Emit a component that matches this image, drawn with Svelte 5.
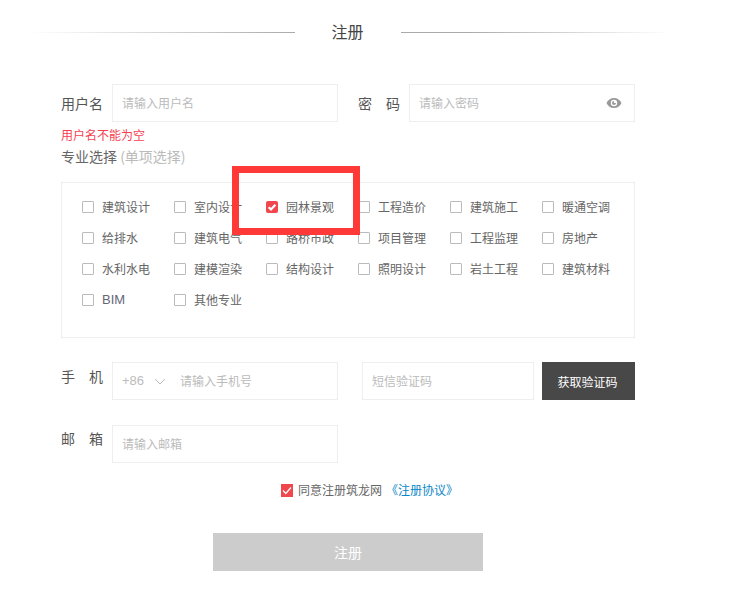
<script>
  const majors = ['建筑设计','室内设计','园林景观','工程造价','建筑施工','暖通空调','给排水','建筑电气','路桥市政','项目管理','工程监理','房地产','水利水电','建模渲染','结构设计','照明设计','岩土工程','建筑材料','BIM','其他专业'];
</script>

<div class="page">
  <header class="title">
    <span class="line left"></span>
    <h1>注册</h1>
    <span class="line right"></span>
  </header>

  <form class="form">
    <div class="row first">
      <div class="field">
        <span class="label">用户名</span>
        <div class="input"><span class="ph">请输入用户名</span></div>
      </div>
      <div class="field pw">
        <span class="label spread short">密码</span>
        <div class="input between">
          <span class="ph">请输入密码</span>
          <svg class="eye" viewBox="0 0 16 12" width="16" height="12">
            <path fill="#999" fill-rule="evenodd" d="M8 1C4.6 1 1.8 3 .5 6c1.3 3 4.1 5 7.5 5s6.200-2 7.500-5C14.200 3 11.400 1 8 1zm0 8.200A3.200 3.200 0 1 1 8 2.800a3.200 3.200 0 0 1 0 6.400z"/>
            <path fill="#999" d="M8 4a2 2 0 1 0 2 2H8z"/>
          </svg>
        </div>
      </div>
    </div>

    <p class="error">用户名不能为空</p>
    <p class="section">专业选择 <span class="hint">(单项选择)</span></p>

    <div class="majors">
      {#each majors as m, i}
        <div class="major">
          <span class="box" class:checked={i === 2}>
            {#if i === 2}
              <svg viewBox="0 0 12 12" width="12" height="12"><path d="M2.600 6.200 5 8.400 9.400 3.800" fill="none" stroke="#fff" stroke-width="2.200"/></svg>
            {/if}
          </span>
          <span class="name" class:latin={m === 'BIM'}>{m}</span>
        </div>
      {/each}
      <div class="mark"></div>
    </div>

    <div class="row phone">
      <div class="field">
        <span class="label spread top">手机</span>
        <div class="input">
          <span class="code">+86</span>
          <svg class="chev" viewBox="0 0 12 7" width="12" height="7"><path d="M1 1l5 5 5-5" fill="none" stroke="#bbb" stroke-width="1"/></svg>
          <span class="ph">请输入手机号</span>
        </div>
      </div>
      <div class="sms">
        <div class="input grow"><span class="ph">短信验证码</span></div>
        <button type="button" class="get">获取验证码</button>
      </div>
    </div>

    <div class="row email">
      <div class="field">
        <span class="label spread top mail">邮箱</span>
        <div class="input"><span class="ph">请输入邮箱</span></div>
      </div>
    </div>

    <div class="agree">
      <span class="tick">
        <svg viewBox="0 0 12 13" width="12" height="13"><path d="M2 6.500 4.800 9.500 10 3.500" fill="none" stroke="#fff" stroke-width="1.200"/></svg>
      </span>
      <span class="agree-text">同意注册筑龙网</span>
      <a href="#top" class="link">《注册协议》</a>
    </div>

    <button type="button" class="submit">注册</button>
  </form>
</div>

<style>
  :global(body) {
    margin: 0;
    background: #fff;
  }
  .page {
    width: 754px;
    height: 589px;
    overflow: hidden;
    font-family: "Noto Sans CJK SC", "Noto Sans", sans-serif;
    color: #555;
    font-size: 12px;
  }
  .title {
    display: flex;
    align-items: center;
    height: 20px;
    padding-top: 22px;
  }
  .title h1 {
    margin: 0;
    width: 106px;
    box-sizing: border-box;
    padding: 0 1px 2px 0;
    flex: none;
    text-align: center;
    font-size: 16px;
    font-weight: 400;
    line-height: 20px;
    color: #444;
  }
  .line {
    height: 1px;
  }
  .line.left {
    width: 295px;
    background: linear-gradient(to right, #fff 10%, #aaa 100%);
  }
  .line.right {
    width: 270px;
    background: linear-gradient(to right, #aaa 25%, #fff 100%);
  }
  .form {
    width: 574px;
    margin-left: 61px;
  }
  .row {
    display: flex;
    justify-content: space-between;
  }
  .row.first {
    margin-top: 42px;
  }
  .field {
    display: flex;
    width: 277px;
    align-items: center;
  }
  .label {
    width: 51px;
    flex: none;
    font-size: 14px;
    line-height: 38px;
    color: #555;
    white-space: nowrap;
  }
  .spread {
    letter-spacing: 14px;
  }
  .short {
    width: 51px;
  }
  .top {
    align-self: flex-start;
    line-height: 28px;
  }
  .mail {
    line-height: 26px;
  }
  .pw {
    width: 277px;
  }
  .input {
    width: 226px;
    height: 38px;
    box-sizing: border-box;
    border: 1px solid #eee;
    display: flex;
    align-items: center;
    padding: 0 9px;
    line-height: 36px;
    flex: none;
  }
  .between {
    justify-content: space-between;
    padding-right: 12px;
  }
  .ph {
    color: #bbb;
    font-size: 12px;
  }
  .code {
    color: #bbb;
    font-size: 13px;
    font-family: "Liberation Sans", sans-serif;
  }
  .chev {
    margin: 0 14px 0 10px;
    flex: none;
  }
  .error {
    margin: 6px 0 0;
    color: #f6404f;
    font-size: 12px;
    line-height: 14px;
  }
  .section {
    margin: 4px 0 0;
    font-size: 14px;
    line-height: 20px;
    color: #666;
  }
  .hint {
    color: #bbb;
    font-size: 14px;
  }
  .majors {
    position: relative;
    margin-top: 16px;
    box-sizing: border-box;
    height: 156px;
    border: 1px solid #eee;
    padding: 8px 0 0 20px;
    display: grid;
    grid-template-columns: repeat(6, 92px);
    grid-auto-rows: 31px;
  }
  .major {
    display: flex;
    align-items: center;
    gap: 8px;
    height: 31px;
  }
  .box {
    width: 12px;
    height: 12px;
    box-sizing: border-box;
    border: 1px solid #bbb;
    border-radius: 1px;
    flex: none;
    position: relative;
  }
  .box.checked {
    border: none;
    background: #f0464e;
    border-radius: 2px;
  }
  .box svg {
    display: block;
  }
  .name {
    font-size: 12px;
    color: #666;
  }
  .latin {
    font-family: "Liberation Sans", sans-serif;
    font-size: 13px;
    color: #667;
  }
  .mark {
    position: absolute;
    left: 170px;
    top: -17px;
    width: 128px;
    height: 69px;
    box-sizing: border-box;
    border: 7px solid #ff3838;
  }
  .row.phone {
    margin-top: 24px;
  }
  .sms {
    display: flex;
    gap: 8px;
    width: 273px;
  }
  .grow {
    width: 172px;
  }
  .get {
    width: 93px;
    height: 38px;
    border: none;
    padding: 0 2px 0 0;
    background: #484848;
    color: #fff;
    font: inherit;
    font-size: 12px;
  }
  .row.email {
    margin-top: 25px;
  }
  .agree {
    margin-top: 20px;
    margin-left: 220px;
    display: flex;
    align-items: center;
    height: 14px;
    font-size: 12px;
    line-height: 14px;
  }
  .tick {
    width: 12px;
    height: 13px;
    background: #f0464e;
    margin-right: 5px;
  }
  .tick svg {
    display: block;
  }
  .agree-text {
    color: #666;
  }
  .link {
    color: #0a86c8;
    text-decoration: none;
    margin-left: 4px;
  }
  .submit {
    display: block;
    width: 270px;
    height: 38px;
    margin: 36px 0 0 152px;
    padding: 0;
    border: none;
    background: #ccc;
    color: #fff;
    font: inherit;
    font-size: 14px;
  }
</style>
